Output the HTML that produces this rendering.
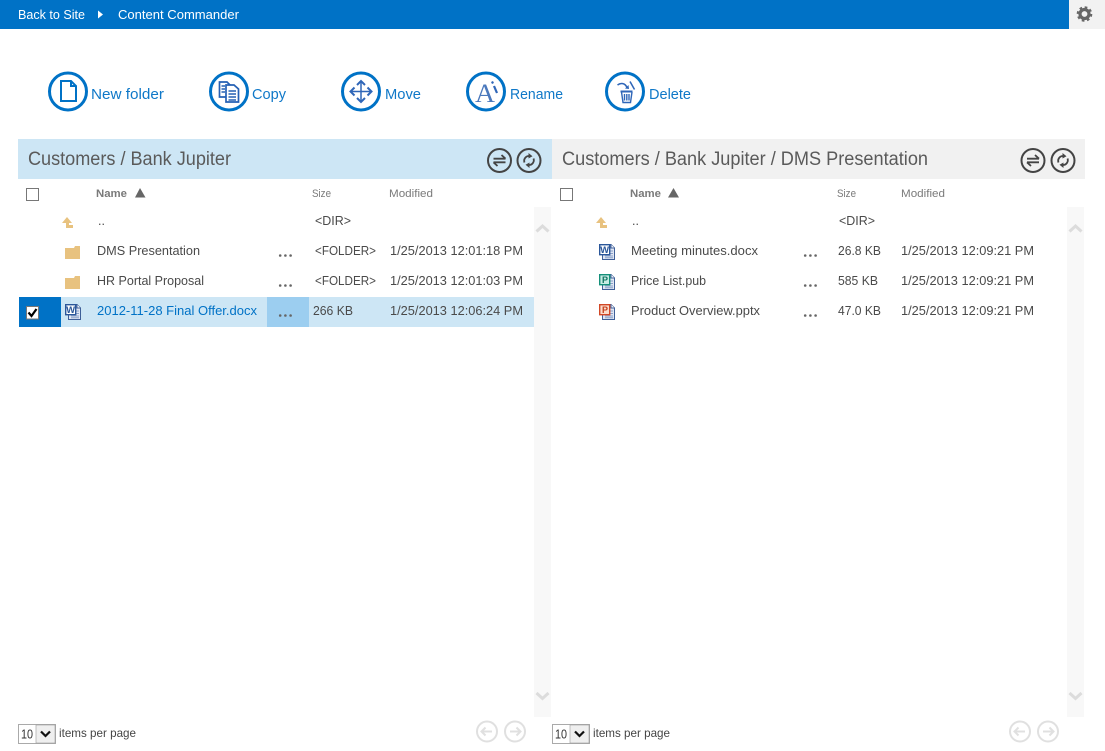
<!DOCTYPE html>
<html><head><meta charset="utf-8"><title>Content Commander</title>
<style>
html,body{margin:0;padding:0;background:#fff;overflow:hidden}
svg{display:block}
text{font-family:"Liberation Sans",sans-serif;white-space:pre}
.r{font-size:12.500px;fill:#4a4a4a}
.h{font-size:11px;fill:#7a7a7a}
.t{font-size:19px;fill:#5a5a5a}
.b{font-size:15px;fill:#0f78c8}
</style></head><body>
<svg width="1105" height="751" viewBox="0 0 1105 751" xmlns="http://www.w3.org/2000/svg">
<defs>
<g id="dots" fill="#666"><circle cx="1.200" cy="1.500" r="1.300"/><circle cx="6.400" cy="1.500" r="1.300"/><circle cx="11.600" cy="1.500" r="1.300"/></g>
<path id="folder" d="M0 3H9L10 1H15V14H0Z" fill="#e8c27f"/>
<path id="up" d="M0 6L5 0L10 6H7V8H11V11H4V6Z" fill="#e8c27f"/>
<g id="sheet"><path d="M3.500 0.500H12L15.500 4V15.500H3.500Z" fill="#dfe6f3" stroke="#3f5f98"/><path d="M6 12H14M6 13.800H14M11 7H14M11 9.500H14" stroke="#8aa0c8"/><path d="M12 0.500V4H15.500" fill="#fff" stroke="#3f5f98"/></g>
<g id="swap" fill="none" stroke="#444"><circle cx="0" cy="0" r="11.500" stroke-width="2"/><path d="M-6 -1.800H6M6 -1.800L2 -5.500M6 1.800H-6M-6 1.800L-2 5.500" stroke-width="1.800"/></g>
<g id="refresh" fill="none" stroke="#444"><circle cx="0" cy="0" r="11.500" stroke-width="2"/><path d="M-4.500 2A4.800 4.800 0 0 1 0 -4.500M4.500 -2A4.800 4.800 0 0 1 0 4.500" stroke-width="1.800"/><path d="M-0.500 -7.500L3.500 -4.200L-0.500 -2ZM0.500 7.500L-3.500 4.200L0.500 2Z" fill="#444" stroke="none"/></g>
<path id="chevU" d="M-6 3.500L0 -2L6 3.500" fill="none" stroke="#dcdcdc" stroke-width="3"/>
<path id="chevD" d="M-6 -3L0 2.500L6 -3" fill="none" stroke="#dcdcdc" stroke-width="3"/>
<g id="navL" fill="none" stroke="#e0e0e0"><circle r="10" stroke-width="2"/><path d="M5 0H-5M-1.500 -4L-5.500 0L-1.500 4" stroke-width="2"/></g>
<g id="navR" fill="none" stroke="#e0e0e0"><circle r="10" stroke-width="2"/><path d="M-5 0H5M1.500 -4L5.500 0L1.500 4" stroke-width="2"/></g>
<g id="sel"><rect x="0.500" y="0.500" width="37" height="19" fill="#fff" stroke="#aaa"/><rect x="18" y="1" width="19" height="18" fill="#efefef" stroke="#999" stroke-width="0.600"/><path d="M23 7.500L27.500 12L32 7.500" fill="none" stroke="#111" stroke-width="2.200"/></g>
</defs>

<!-- top bar -->
<rect x="0" y="0" width="1069" height="29" fill="#0072c6"/>
<rect x="1069" y="0" width="36" height="29" fill="#f2f2f2"/>
<text x="18" y="19" font-size="13" fill="#fff" textLength="67" lengthAdjust="spacingAndGlyphs">Back to Site</text>
<path d="M98 10.500L103 14.500L98 18.500Z" fill="#fff"/>
<text x="118" y="19" font-size="13" fill="#fff" textLength="121" lengthAdjust="spacingAndGlyphs">Content Commander</text>
<g transform="translate(1084.500,14)" fill="none" stroke="#666"><circle r="4.500" stroke-width="3.200"/><circle r="6.500" stroke-width="2.600" stroke-dasharray="2.550 2.550"/></g>

<!-- toolbar -->
<g fill="none" stroke="#0072c6" stroke-width="3">
<circle cx="68" cy="91.500" r="18.500"/><circle cx="229" cy="91.500" r="18.500"/><circle cx="361" cy="91.500" r="18.500"/><circle cx="486" cy="91.500" r="18.500"/><circle cx="625" cy="91.500" r="18.500"/>
</g>
<path d="M61 81H71L76 86V101H61ZM71 81V86H76" fill="none" stroke="#0072c6" stroke-width="2"/>
<g fill="#fff" stroke="#2560b4" stroke-width="1.700">
<path d="M219.500 82H227L230 85V97H219.500Z"/>
<path d="M226 85H234L238.500 89V102H226Z"/>
<path d="M221.500 86H225M221.500 89H225M221.500 92H225M228.500 91H236M228.500 94H236M228.500 97H236M228.500 100H236" fill="none" stroke-width="1.400"/>
</g>
<g fill="none" stroke="#2f66b8" stroke-width="1.500">
<path d="M351 91.500H371M361 81.500V101.500"/>
<path d="M354.500 87.500L350.500 91.500L354.500 95.500M367.500 87.500L371.500 91.500L367.500 95.500M357 85L361 81L365 85M357 98L361 102L365 98" stroke-width="2"/>
</g>
<text x="475" y="102" style="font-family:'Liberation Serif',serif" font-size="26" fill="#4a78bc" textLength="20" lengthAdjust="spacingAndGlyphs">A</text>
<path d="M492 81.500L493 83.500M494 86L497 93" fill="none" stroke="#2f66b8" stroke-width="2.200"/>
<g fill="none" stroke="#2f66b8">
<path d="M620.500 91.500H632.500" stroke-width="2"/>
<path d="M621.500 92L623 102.500H630.500L632 92M624.500 94V100.500M626.800 94V100.500M629 94V100.500" stroke-width="1.400"/>
<path d="M617.500 85C621 82.500 625 83 627 87.500" stroke-width="1.600"/>
<path d="M625 88.500L629 89L628.500 85Z" fill="#2f66b8" stroke="none"/>
<path d="M630 81.500L634.500 89.500" stroke-width="1.500"/>
</g>
<text class="b" x="91" y="99" textLength="73" lengthAdjust="spacingAndGlyphs">New folder</text>
<text class="b" x="252" y="99" textLength="34" lengthAdjust="spacingAndGlyphs">Copy</text>
<text class="b" x="385" y="99" textLength="36" lengthAdjust="spacingAndGlyphs">Move</text>
<text class="b" x="510" y="99" textLength="53" lengthAdjust="spacingAndGlyphs">Rename</text>
<text class="b" x="649" y="99" textLength="42" lengthAdjust="spacingAndGlyphs">Delete</text>

<!-- panel headers -->
<rect x="18" y="139" width="534" height="40" fill="#cde6f5"/>
<rect x="552" y="139" width="533" height="40" fill="#f1f1f1"/>
<text class="t" x="28" y="165" textLength="203" lengthAdjust="spacingAndGlyphs">Customers / Bank Jupiter</text>
<text class="t" x="562" y="165" textLength="366" lengthAdjust="spacingAndGlyphs">Customers / Bank Jupiter / DMS Presentation</text>
<use href="#swap" x="499.500" y="160.500"/><use href="#refresh" x="529" y="160.500"/>
<use href="#swap" x="1033" y="160.500"/><use href="#refresh" x="1063" y="160.500"/>

<!-- column headers -->
<rect x="26.500" y="188.500" width="12" height="12" fill="#fff" stroke="#777"/>
<rect x="560.500" y="188.500" width="12" height="12" fill="#fff" stroke="#777"/>
<text class="h" x="96" y="197" font-weight="bold" textLength="31" lengthAdjust="spacingAndGlyphs">Name</text>
<path d="M135 197.500L140 188L145.500 197.500Z" fill="#666"/>
<text class="h" x="312" y="197" textLength="19" lengthAdjust="spacingAndGlyphs">Size</text>
<text class="h" x="389" y="197" textLength="44" lengthAdjust="spacingAndGlyphs">Modified</text>
<text class="h" x="630" y="197" font-weight="bold" textLength="31" lengthAdjust="spacingAndGlyphs">Name</text>
<path d="M668 197.500L673.500 188L679 197.500Z" fill="#666"/>
<text class="h" x="837" y="197" textLength="19" lengthAdjust="spacingAndGlyphs">Size</text>
<text class="h" x="901" y="197" textLength="44" lengthAdjust="spacingAndGlyphs">Modified</text>

<!-- scroll strips -->
<rect x="534" y="207" width="17" height="510" fill="#f8f8f8"/>
<rect x="1067" y="207" width="17" height="510" fill="#f8f8f8"/>
<use href="#chevU" x="542.500" y="228"/><use href="#chevD" x="542.500" y="696"/>
<use href="#chevU" x="1075.500" y="228"/><use href="#chevD" x="1075.500" y="696"/>

<!-- left rows -->
<rect x="19" y="297" width="515" height="30" fill="#cde6f5"/>
<rect x="19" y="297" width="42" height="30" fill="#0072c6"/>
<rect x="267" y="297" width="42" height="30" fill="#9ccef0"/>
<rect x="26.500" y="306.500" width="12" height="12.500" fill="#fff" stroke="#777"/>
<path d="M28.500 312.500L31.500 316L36.500 309" fill="none" stroke="#000" stroke-width="2.200"/>

<use href="#up" x="62" y="217"/>
<text class="r" x="98" y="225">..</text>
<text class="r" x="315" y="225" textLength="36" lengthAdjust="spacingAndGlyphs">&lt;DIR&gt;</text>

<use href="#folder" x="65" y="245"/>
<text class="r" x="97" y="255" textLength="103" lengthAdjust="spacingAndGlyphs">DMS Presentation</text>
<use href="#dots" x="279" y="254"/>
<text class="r" x="315" y="255" textLength="61" lengthAdjust="spacingAndGlyphs">&lt;FOLDER&gt;</text>
<text class="r" x="390" y="255" textLength="133" lengthAdjust="spacingAndGlyphs">1/25/2013 12:01:18 PM</text>

<use href="#folder" x="65" y="275"/>
<text class="r" x="97" y="285" textLength="107" lengthAdjust="spacingAndGlyphs">HR Portal Proposal</text>
<use href="#dots" x="279" y="284"/>
<text class="r" x="315" y="285" textLength="61" lengthAdjust="spacingAndGlyphs">&lt;FOLDER&gt;</text>
<text class="r" x="390" y="285" textLength="133" lengthAdjust="spacingAndGlyphs">1/25/2013 12:01:03 PM</text>

<g transform="translate(65,304)"><use href="#sheet"/><rect x="0.700" y="0.700" width="10" height="10" fill="#fff" stroke="#2b579a" stroke-width="1.400"/><text x="1.300" y="8.800" font-size="9" font-weight="bold" fill="#2b579a" textLength="8.800" lengthAdjust="spacingAndGlyphs">W</text></g>
<text class="r" x="97" y="315" style="fill:#0072c6" textLength="160" lengthAdjust="spacingAndGlyphs">2012-11-28 Final Offer.docx</text>
<use href="#dots" x="279" y="314"/>
<text class="r" x="313" y="315" textLength="40" lengthAdjust="spacingAndGlyphs">266 KB</text>
<text class="r" x="390" y="315" textLength="133" lengthAdjust="spacingAndGlyphs">1/25/2013 12:06:24 PM</text>

<!-- right rows -->
<use href="#up" x="596" y="217"/>
<text class="r" x="632" y="225">..</text>
<text class="r" x="839" y="225" textLength="36" lengthAdjust="spacingAndGlyphs">&lt;DIR&gt;</text>

<g transform="translate(599,244)"><use href="#sheet"/><rect x="0.700" y="0.700" width="10" height="10" fill="#fff" stroke="#2b579a" stroke-width="1.400"/><text x="1.300" y="8.800" font-size="9" font-weight="bold" fill="#2b579a" textLength="8.800" lengthAdjust="spacingAndGlyphs">W</text></g>
<text class="r" x="631" y="255" textLength="127" lengthAdjust="spacingAndGlyphs">Meeting minutes.docx</text>
<use href="#dots" x="804" y="254"/>
<text class="r" x="838" y="255" textLength="43" lengthAdjust="spacingAndGlyphs">26.8 KB</text>
<text class="r" x="901" y="255" textLength="133" lengthAdjust="spacingAndGlyphs">1/25/2013 12:09:21 PM</text>

<g transform="translate(599,274)"><use href="#sheet"/><rect x="0.700" y="0.700" width="10" height="10" fill="#c8ece4" stroke="#15907a" stroke-width="1.400"/><text x="3" y="8.800" font-size="9" font-weight="bold" fill="#107562">P</text></g>
<text class="r" x="631" y="285" textLength="75" lengthAdjust="spacingAndGlyphs">Price List.pub</text>
<use href="#dots" x="804" y="284"/>
<text class="r" x="838" y="285" textLength="40" lengthAdjust="spacingAndGlyphs">585 KB</text>
<text class="r" x="901" y="285" textLength="133" lengthAdjust="spacingAndGlyphs">1/25/2013 12:09:21 PM</text>

<g transform="translate(599,304)"><use href="#sheet"/><rect x="0.700" y="0.700" width="10" height="10" fill="#fbdccc" stroke="#d24726" stroke-width="1.400"/><text x="3" y="8.800" font-size="9" font-weight="bold" fill="#c43e1c">P</text></g>
<text class="r" x="631" y="315" textLength="129" lengthAdjust="spacingAndGlyphs">Product Overview.pptx</text>
<use href="#dots" x="804" y="314"/>
<text class="r" x="838" y="315" textLength="43" lengthAdjust="spacingAndGlyphs">47.0 KB</text>
<text class="r" x="901" y="315" textLength="133" lengthAdjust="spacingAndGlyphs">1/25/2013 12:09:21 PM</text>

<!-- footers -->
<use href="#sel" x="18" y="724"/>
<text x="21" y="738.500" font-size="13" fill="#333" textLength="12" lengthAdjust="spacingAndGlyphs">10</text>
<text x="59" y="737" font-size="12" fill="#444" textLength="77" lengthAdjust="spacingAndGlyphs">items per page</text>
<use href="#navL" x="487" y="731.500"/><use href="#navR" x="515" y="731.500"/>

<use href="#sel" x="552" y="724"/>
<text x="555" y="738.500" font-size="13" fill="#333" textLength="12" lengthAdjust="spacingAndGlyphs">10</text>
<text x="593" y="737" font-size="12" fill="#444" textLength="77" lengthAdjust="spacingAndGlyphs">items per page</text>
<use href="#navL" x="1020" y="731.500"/><use href="#navR" x="1048" y="731.500"/>
</svg>
</body></html>
